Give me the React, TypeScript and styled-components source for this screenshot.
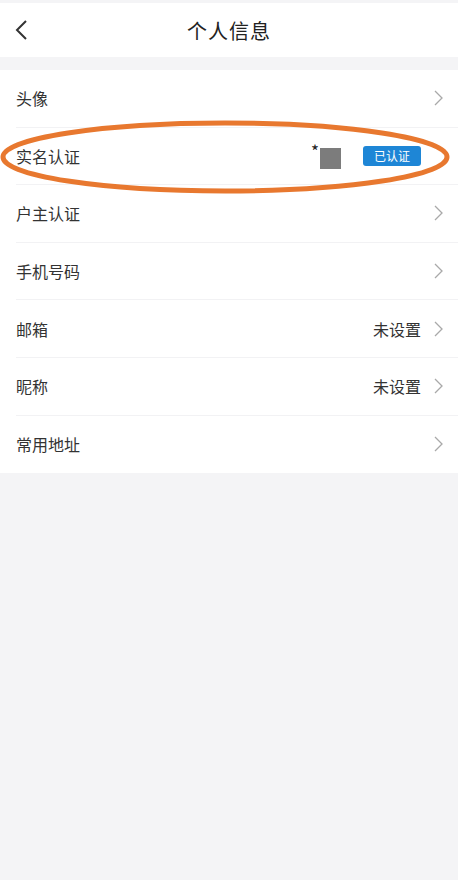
import React from "react";
import styled, { createGlobalStyle } from "styled-components";

const Global = createGlobalStyle`
  html, body { margin: 0; padding: 0; background: #f4f4f6; }
  body { font-family: "Noto Sans CJK SC", "Noto Sans", sans-serif; }
  * { box-sizing: border-box; }
`;

const Page = styled.div`
  width: 458px;
  min-height: 880px;
  background: #f4f4f6;
  padding-top: 3px;
`;

const Header = styled.header`
  height: 54px;
  background: #fff;
  display: grid;
  grid-template-columns: 60px 1fr 60px;
  align-items: center;
`;

const Back = styled.div`
  padding-left: 15px;
  display: flex;
  align-items: center;
`;

const Title = styled.h1`
  margin: 0;
  text-align: center;
  font-size: 20px;
  font-weight: 400;
  color: #222;
  letter-spacing: 1px;
`;

const List = styled.div`
  margin-top: 13px;
  background: #fff;
  position: relative;
`;

const Row = styled.div<{ $last?: boolean }>`
  height: 57.6px;
  margin-left: 16px;
  padding-right: 14px;
  display: flex;
  align-items: center;
  border-bottom: ${(p) => (p.$last ? "none" : "1px solid #f2f2f4")};
`;

const Label = styled.span`
  flex: 1;
  font-size: 16px;
  color: #333;
`;

const Value = styled.span`
  font-size: 16px;
  color: #333;
  margin-right: 13px;
`;

const Masked = styled.span`
  display: flex;
  align-items: flex-start;
  margin-right: 22px;
  color: #222;
  font-size: 17px;
  line-height: 1;
`;

const Star = styled.span`
  margin-top: -1px;
`;

const Square = styled.span`
  width: 21px;
  height: 21px;
  background: #7c7c7c;
  margin-top: 5px;
  margin-left: 1px;
`;

const Badge = styled.span`
  background: #1e86d6;
  color: #fff;
  font-size: 12px;
  border-radius: 3px;
  width: 58px;
  height: 20px;
  display: flex;
  align-items: center;
  justify-content: center;
  margin-right: 23px;
`;

const ChevronBox = styled.span`
  width: 10px;
  display: flex;
`;

const Ring = styled.svg`
  position: absolute;
  left: 0;
  top: 50px;
  pointer-events: none;
`;

const Chevron = () => (
  <ChevronBox>
    <svg width="9" height="16" viewBox="0 0 9 16">
      <path d="M1 1 L8 8 L1 15" fill="none" stroke="#a9a9a9" strokeWidth="1.3" />
    </svg>
  </ChevronBox>
);

const items: { label: string; value?: string }[] = [
  { label: "头像" },
  { label: "实名认证" },
  { label: "户主认证" },
  { label: "手机号码" },
  { label: "邮箱", value: "未设置" },
  { label: "昵称", value: "未设置" },
  { label: "常用地址" },
];

export default function App() {
  return (
    <Page>
      <Global />
      <Header>
        <Back>
          <svg width="14" height="22" viewBox="0 0 14 22">
            <path d="M11 2 L2 11 L11 20" fill="none" stroke="#333" strokeWidth="2" />
          </svg>
        </Back>
        <Title>个人信息</Title>
        <div />
      </Header>
      <List>
        {items.map((it, i) => (
          <Row key={it.label} $last={i === items.length - 1}>
            <Label>{it.label}</Label>
            {it.label === "实名认证" ? (
              <>
                <Masked>
                  <Star>*</Star>
                  <Square />
                </Masked>
                <Badge>已认证</Badge>
              </>
            ) : (
              <>
                {it.value && <Value>{it.value}</Value>}
                <Chevron />
              </>
            )}
          </Row>
        ))}
        <Ring width="458" height="76" viewBox="0 0 458 76">
          <ellipse cx="225" cy="37" rx="222" ry="34" fill="none" stroke="#e8782f" strokeWidth="5" />
        </Ring>
      </List>
    </Page>
  );
}
